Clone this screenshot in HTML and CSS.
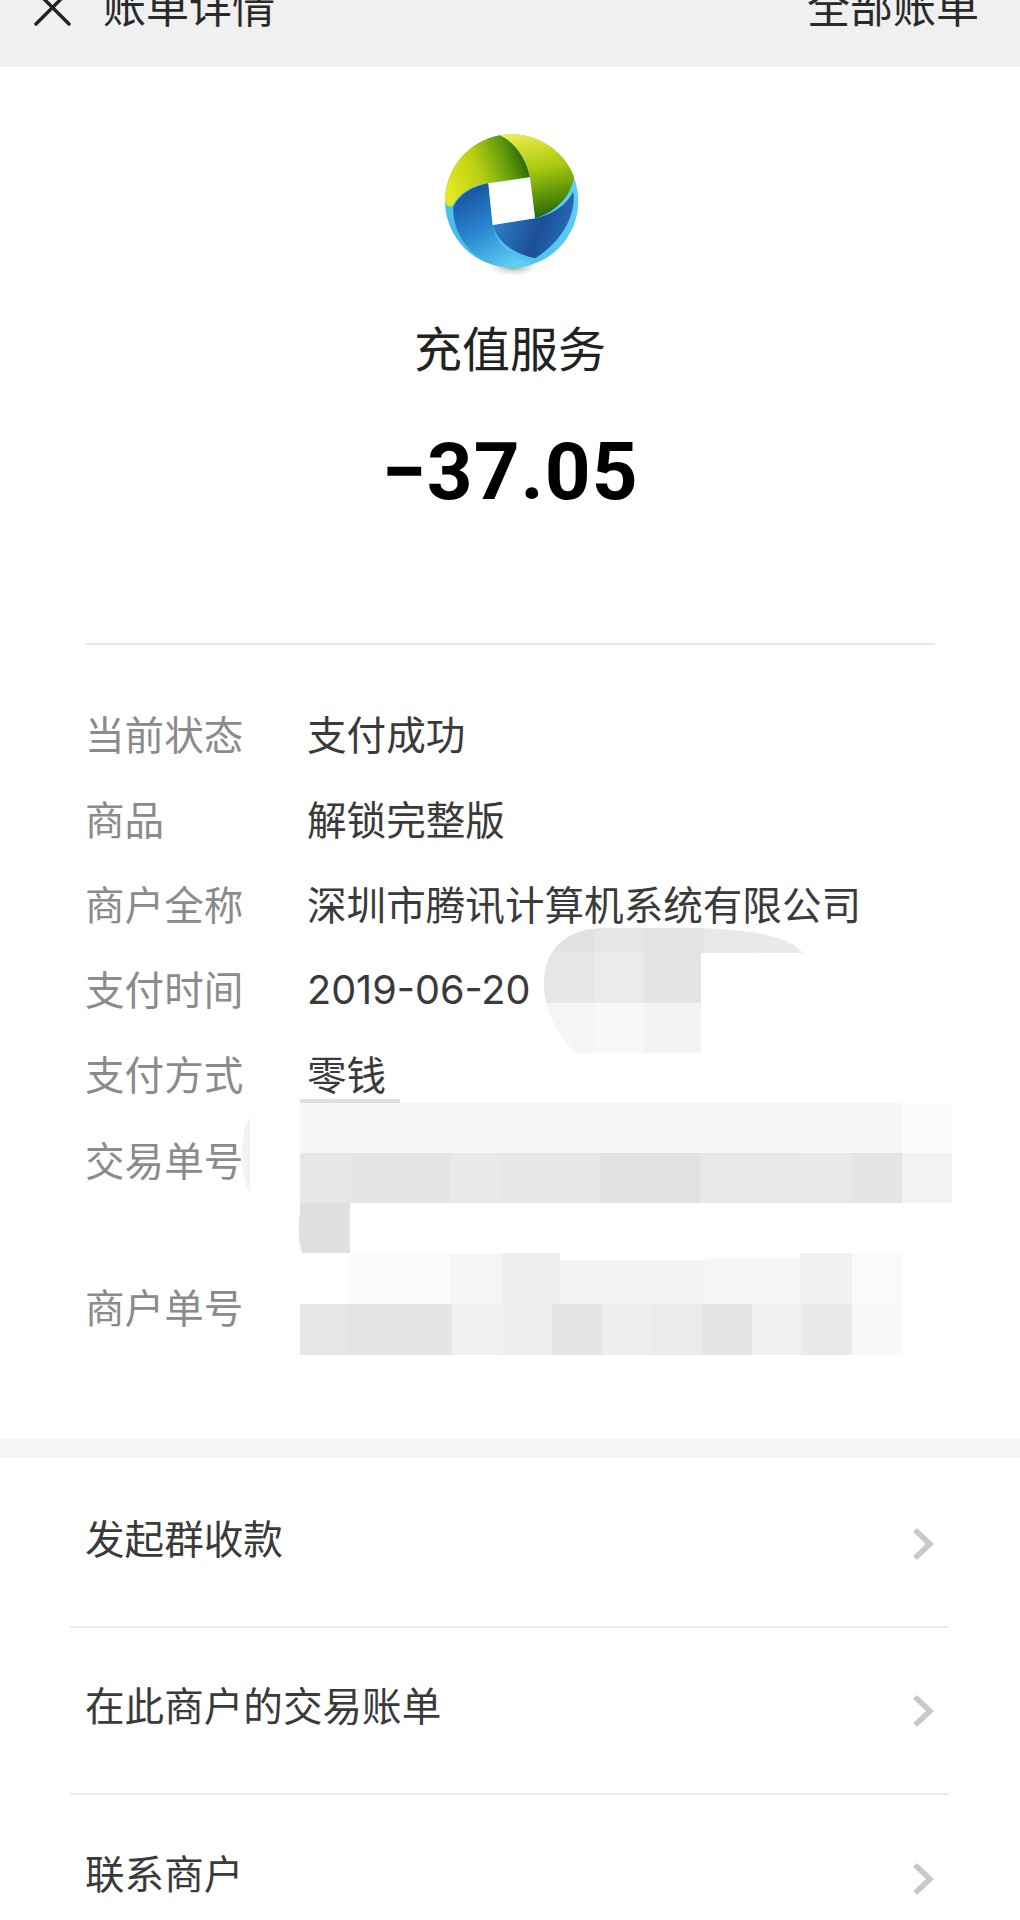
FILE: index.html
```html
<!DOCTYPE html>
<html lang="zh-CN">
<head>
<meta charset="utf-8">
<title>账单详情</title>
<link rel="stylesheet" href="styles.css">
</head>
<body>
<div class="page">
  <header class="topbar">
    <div class="topbar-left">
      <svg class="close-icon" width="40" height="30" viewBox="0 0 40 30"><path d="M3 24 L36 -9 M36 24 L3 -9" fill="none" stroke="#222" stroke-width="3.4" stroke-linecap="round"/></svg>
      <span>账单详情</span>
    </div>
    <span>全部账单</span>
  </header>

  <section class="summary">
    <svg class="logo" width="180" height="170" viewBox="0 0 540 510">
      <defs>
        <linearGradient id="gLeft" x1="0" y1="0.65" x2="1" y2="0.35"><stop offset="0" stop-color="#e6e81e"/><stop offset="0.4" stop-color="#b9d014"/><stop offset="0.75" stop-color="#5f9a0c"/><stop offset="1" stop-color="#1f5f06"/></linearGradient>
        <linearGradient id="gRight" x1="0.25" y1="0" x2="0.45" y2="1"><stop offset="0" stop-color="#eceb4a"/><stop offset="0.45" stop-color="#a8c80e"/><stop offset="1" stop-color="#2a6c08"/></linearGradient>
        <linearGradient id="gBlueL" x1="0.2" y1="0" x2="0.7" y2="1"><stop offset="0" stop-color="#174f9c"/><stop offset="0.5" stop-color="#2a86cf"/><stop offset="1" stop-color="#5fd0f5"/></linearGradient>
        <linearGradient id="gBlueR" x1="0" y1="0.3" x2="1" y2="0.6"><stop offset="0" stop-color="#2f86cc"/><stop offset="0.6" stop-color="#1c4f98"/><stop offset="1" stop-color="#2a70bb"/></linearGradient>
        <linearGradient id="gCyan" x1="0" y1="1" x2="1" y2="0"><stop offset="0" stop-color="#3fb9ea"/><stop offset="1" stop-color="#6ed3f5"/></linearGradient>
        <radialGradient id="gShadow"><stop offset="0" stop-color="#999"/><stop offset="1" stop-color="#fff" stop-opacity="0"/></radialGradient>
      </defs>
      <ellipse cx="280" cy="442" rx="90" ry="30" fill="url(#gShadow)"/>
      <circle cx="275" cy="243" r="200" fill="url(#gCyan)"/>
      <path d="M75 243 A200 200 0 0 1 240 46 C290 70 320 120 330 172 L205 190 C160 196 120 215 97 258 C84 262 78 255 75 243Z" fill="url(#gLeft)"/>
      <path d="M240 46 A200 200 0 0 1 462 170 C455 225 410 275 345 295 L330 172 C320 120 290 70 240 46Z" fill="url(#gRight)"/>
      <path d="M218 315 L345 295 C395 285 440 255 460 215 C470 290 420 370 345 415 C280 400 230 365 218 315Z" fill="url(#gBlueR)"/>
      <path d="M205 190 L218 315 C225 365 265 410 340 432 C320 442 295 443 275 443 C170 443 95 350 100 260 C120 220 160 198 205 190Z" fill="url(#gBlueL)"/>
      <path d="M205 190 L330 172 L345 295 L218 315Z" fill="#fff"/>
    </svg>
    <h1 class="merchant">充值服务</h1>
    <div class="amount">−37.05</div>
  </section>

  <section class="details">
    <div class="row"><span class="label">当前状态</span><span class="value">支付成功</span></div>
    <div class="row"><span class="label">商品</span><span class="value">解锁完整版</span></div>
    <div class="row"><span class="label">商户全称</span><span class="value">深圳市腾讯计算机系统有限公司</span></div>
    <div class="row"><span class="label">支付时间</span><span class="value value-num">2019-06-20</span></div>
    <div class="row"><span class="label">支付方式</span><span class="value">零钱</span></div>
    <div class="row row-tall"><span class="label">交易单号</span><span class="value"></span></div>
    <div class="row"><span class="label">商户单号</span><span class="value"></span></div>
  </section>

  <nav class="menu">
    <a class="menu-item"><span>发起群收款</span><svg class="chev" width="22" height="34" viewBox="0 0 22 34"><path d="M3 3 L18 17 L3 31" fill="none" stroke="#c8c8cc" stroke-width="5.5"/></svg></a>
    <a class="menu-item"><span>在此商户的交易账单</span><svg class="chev" width="22" height="34" viewBox="0 0 22 34"><path d="M3 3 L18 17 L3 31" fill="none" stroke="#c8c8cc" stroke-width="5.5"/></svg></a>
    <a class="menu-item"><span>联系商户</span><svg class="chev" width="22" height="34" viewBox="0 0 22 34"><path d="M3 3 L18 17 L3 31" fill="none" stroke="#c8c8cc" stroke-width="5.5"/></svg></a>
  </nav>

  <svg class="redaction" width="1020" height="1920" viewBox="0 0 1020 1920">
    <defs>
      <clipPath id="clipTime"><path d="M600 928 L700 928 C760 930 790 938 803 953 L701 953 L701 1053 L575 1053 C555 1030 544 1010 544 983 C544 955 560 930 600 928Z"/></clipPath>
    </defs>
    <g clip-path="url(#clipTime)">
      <rect x="544" y="928" width="50" height="25" fill="#e2e2e2"/><rect x="594" y="928" width="50" height="25" fill="#e6e6e6"/><rect x="644" y="928" width="60" height="25" fill="#e3e3e3"/><rect x="704" y="928" width="50" height="25" fill="#e8e8e8"/><rect x="754" y="928" width="50" height="25" fill="#eaeaea"/>
      <rect x="544" y="953" width="50" height="50" fill="#e6e6e6"/><rect x="594" y="953" width="50" height="50" fill="#ebebeb"/><rect x="644" y="953" width="57" height="50" fill="#e4e4e4"/>
      <rect x="544" y="1003" width="50" height="50" fill="#f5f5f5"/><rect x="594" y="1003" width="50" height="50" fill="#f8f8f8"/><rect x="644" y="1003" width="57" height="50" fill="#f3f3f3"/>
    </g>
    <rect x="300" y="1099" width="100" height="4" fill="#dfdfdf"/>
    <path d="M250 1117 C240 1130 238 1175 250 1193Z" fill="#f3f3f3"/>
    <rect x="300" y="1103" width="602" height="50" fill="#f6f6f6"/><rect x="902" y="1103" width="50" height="50" fill="#fbfbfb"/>
    <rect x="300" y="1153" width="50" height="50" fill="#e7e7e7"/><rect x="350" y="1153" width="100" height="50" fill="#e5e5e5"/><rect x="450" y="1153" width="50" height="50" fill="#e9e9e9"/><rect x="500" y="1153" width="100" height="50" fill="#e7e7e7"/><rect x="600" y="1153" width="100" height="50" fill="#e2e2e2"/><rect x="700" y="1153" width="100" height="50" fill="#e8e8e8"/><rect x="800" y="1153" width="50" height="50" fill="#e9e9e9"/><rect x="850" y="1153" width="52" height="50" fill="#e5e5e5"/><rect x="902" y="1153" width="50" height="50" fill="#f2f2f2"/>
    <path d="M350 1203 L300 1203 L300 1212 C298 1225 298 1240 302 1253 L350 1253Z" fill="#e0e0e0"/>
    <rect x="350" y="1253" width="100" height="51" fill="#fbfbfb"/><rect x="450" y="1253" width="52" height="51" fill="#f6f6f6"/><rect x="502" y="1253" width="58" height="51" fill="#efefef"/><rect x="560" y="1260" width="150" height="44" fill="#f4f4f4"/><rect x="710" y="1258" width="90" height="46" fill="#f6f6f6"/><rect x="800" y="1253" width="52" height="51" fill="#f1f1f1"/><rect x="852" y="1253" width="50" height="51" fill="#fafafa"/>
    <rect x="300" y="1304" width="50" height="51" fill="#e6e6e6"/><rect x="350" y="1304" width="50" height="51" fill="#e3e3e3"/><rect x="400" y="1304" width="52" height="51" fill="#e5e5e5"/><rect x="452" y="1304" width="50" height="51" fill="#f0f0f0"/><rect x="502" y="1304" width="50" height="51" fill="#eeeeee"/><rect x="552" y="1304" width="50" height="51" fill="#e5e5e5"/><rect x="602" y="1304" width="50" height="51" fill="#eeeeee"/><rect x="652" y="1304" width="50" height="51" fill="#ebebeb"/><rect x="702" y="1304" width="50" height="51" fill="#e4e4e4"/><rect x="752" y="1304" width="50" height="51" fill="#f0f0f0"/><rect x="802" y="1304" width="50" height="51" fill="#e9e9e9"/><rect x="852" y="1304" width="50" height="51" fill="#f8f8f8"/>
  </svg>
</div>
</body>
</html>
```

FILE: styles.css
```css
* { box-sizing: border-box; }
html, body { margin: 0; padding: 0; background: #fff; }
body { font-family: "Noto Sans CJK SC", "Noto Sans", sans-serif; color: #333; }
.page { position: relative; width: 1020px; height: 1920px; overflow: hidden; background: #fff; }

.topbar {
  height: 67px; background: #f0f0f0; display: flex; justify-content: space-between;
  align-items: flex-start; padding: 0 41px 0 33px; font-size: 43px; line-height: 43px; color: #2a2a2a;
  overflow: hidden;
}
.topbar > span { margin-top: -17px; }
.topbar-left { display: flex; align-items: flex-start; gap: 30px; }
.topbar-left span { margin-top: -17px; }
.close-icon { display: block; overflow: visible; }

.summary { display: flex; flex-direction: column; align-items: center; height: 576px; }
.logo { display: block; margin-top: 53px; }
.merchant { margin: 24px 0 0; font-size: 48px; font-weight: 400; line-height: 64px; color: #222; }
.amount {
  margin-top: 44px; font-family: Roboto, "Liberation Sans", sans-serif; font-size: 80px; font-weight: 700;
  letter-spacing: 1px; line-height: 100px; color: #000;
}

.details { margin: 0 85px; border-top: 2px solid #e8e8e8; padding-top: 45px; height: 796px; }
.row { display: grid; grid-template-columns: 222px 1fr; height: 85px; align-items: center; font-size: 39.6px; }
.row-tall { height: 148px; align-items: start; padding-top: 15px; }
.label { color: #8b8b8b; }
.value { color: #3a3a3a; }
.value-num { font-family: Inter, "Noto Sans", sans-serif; padding-top: 4px; }

.menu { border-top: 19px solid #f4f5f5; padding-top: 3px; }
.menu-item {
  display: flex; justify-content: space-between; align-items: center; height: 167px; margin: 0 71px 0 70px;
  padding: 0 15px; border-bottom: 2px solid #ececec; font-size: 39.6px; color: #3a3a3a;
}
.menu-item:last-child { border-bottom: 0; }
.menu-item span { margin-top: -14px; }
.chev { display: block; }

.redaction { position: absolute; left: 0; top: 0; pointer-events: none; }
```
